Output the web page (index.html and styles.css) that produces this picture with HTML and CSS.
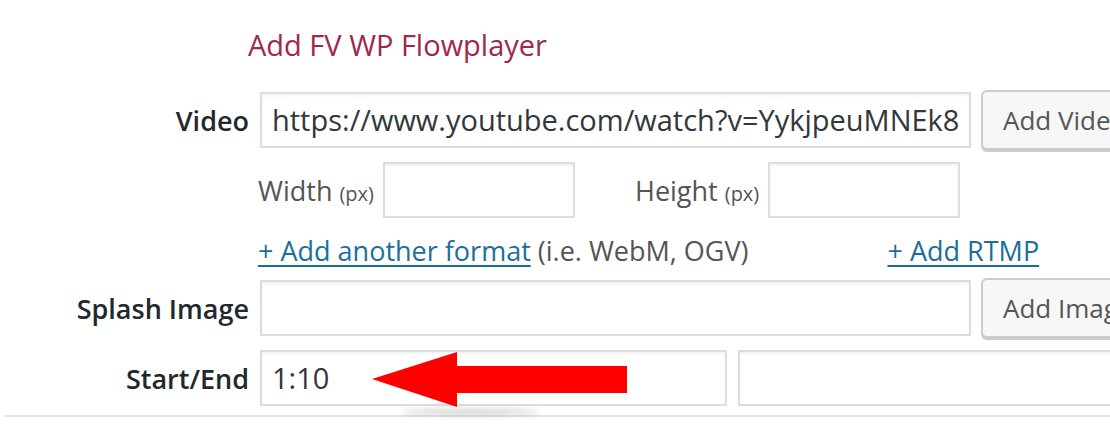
FILE: index.html
```html
<!DOCTYPE html>
<html lang="en">
  <head>
    <meta charset="utf-8" />
    <title>Add FV WP Flowplayer</title>
    <link rel="stylesheet" href="styles.css">
  </head>
  <body>
    <div class="page">
      <h2 class="title">Add FV WP Flowplayer</h2>

      <div class="form">
        <!-- Video -->
        <div class="row row-video">
          <label class="label">Video</label>
          <div class="field">
            <div class="input input-wide">https://www.youtube.com/watch?v=YykjpeuMNEk8</div>
            <button class="button">Add Video</button>
          </div>
        </div>

        <!-- Dimensions -->
        <div class="row row-dims">
          <div class="label"></div>
          <div class="field dims">
            <span class="dim-label">Width <small>(px)</small></span>
            <div class="input input-dim"></div>
            <span class="dim-label dim-height">Height <small>(px)</small></span>
            <div class="input input-dim"></div>
          </div>
        </div>

        <!-- Links -->
        <div class="row row-links">
          <div class="label"></div>
          <div class="field links">
            <a href="#">+ Add another format</a>
            <span class="hint">(i.e. WebM, OGV)</span>
            <a href="#" class="rtmp">+ Add RTMP</a>
          </div>
        </div>

        <!-- Splash -->
        <div class="row row-splash">
          <label class="label">Splash Image</label>
          <div class="field">
            <div class="input input-wide"></div>
            <button class="button">Add Image</button>
          </div>
        </div>

        <!-- Start / End -->
        <div class="row row-start">
          <label class="label">Start/End</label>
          <div class="field start-end">
            <div class="input input-start">1:10</div>
            <div class="input input-end"></div>
            <div class="arrow">
              <svg width="270" height="72" viewBox="0 0 270 72">
                <defs>
                  <filter id="blur" x="-20%" y="-200%" width="140%" height="500%">
                    <feGaussianBlur stdDeviation="3"/>
                  </filter>
                </defs>
                <ellipse cx="100" cy="62" rx="70" ry="3" fill="#000" opacity="0.18" filter="url(#blur)"/>
                <polygon points="2,29 87,2 87,16 257,16 257,43 87,43 87,57" fill="#ff0000"/>
              </svg>
            </div>
          </div>
        </div>
      </div>
    </div>
  </body>
</html>
```

FILE: styles.css
```css
body, html {
  margin: 0;
  padding: 0;
  background: #fff;
  overflow: hidden;
}
.page {
  width: 1110px;
  height: 443px;
  font-family: "Open Sans", "DejaVu Sans", sans-serif;
  color: #32373c;
  overflow: hidden;
}
.title {
  margin: 0;
  padding: 26px 0 0 248px;
  height: 63px;
  box-sizing: border-box;
  font-size: 29px;
  font-weight: 400;
  color: #a0284c;
  line-height: 38px;
}
.form {
  margin-left: 5px;
  width: 1105px;
  border-bottom: 2px solid #e5e5e5;
  padding-bottom: 9px;
}
.row {
  display: flex;
  align-items: center;
}
.label {
  width: 244px;
  flex-shrink: 0;
  text-align: right;
  font-size: 27px;
  font-weight: 600;
  color: #23282d;
  padding-right: 11px;
}
.field {
  display: flex;
  align-items: center;
  flex: 1;
  position: relative;
}
.row-video {
  height: 60px;
  margin-top: 27px;
}
.row-dims {
  height: 56px;
  margin-top: 12px;
}
.row-links {
  height: 60px;
}
.row-splash {
  height: 60px;
}
.row-start {
  height: 56px;
  margin-top: 12px;
}
.input {
  box-sizing: border-box;
  height: 56px;
  border: 2px solid #dddddd;
  box-shadow: inset 0 2px 3px rgba(0, 0, 0, 0.05);
  background: #fff;
  font-size: 29px;
  line-height: 52px;
  padding: 0 10px;
  color: #32373c;
  white-space: nowrap;
  overflow: hidden;
}
.input-wide {
  width: 711px;
}
.button {
  margin-left: 10px;
  height: 60px;
  width: 180px;
  flex-shrink: 0;
  font-family: inherit;
  font-size: 26px;
  color: #555;
  text-align: left;
  white-space: nowrap;
  padding: 0 20px;
  background: #f7f7f7;
  border: 2px solid #cccccc;
  border-radius: 6px;
  box-shadow: 0 2px 0 #cccccc;
}
.dim-label {
  font-size: 27px;
  color: #555;
  margin-left: -2px;
  margin-right: 9px;
  white-space: nowrap;
}
.dim-label small {
  font-size: 20px;
}
.dim-height {
  margin-left: 60px;
}
.input-dim {
  width: 192px;
}
.links {
  font-size: 27px;
  margin-left: -2px;
  padding-top: 4px;
  white-space: nowrap;
}
.links a {
  color: #1c6e99;
  text-decoration: underline;
  text-decoration-thickness: 2px;
  text-underline-offset: 4px;
}
.hint {
  color: #555;
  margin-left: 7px;
}
.rtmp {
  margin-left: 139px;
}
.input-start {
  width: 467px;
  padding-left: 10px;
}
.input-end {
  margin-left: 11px;
  width: 400px;
}
.arrow {
  position: absolute;
  left: 110px;
  top: 0;
}
.arrow svg {
  display: block;
}
```
